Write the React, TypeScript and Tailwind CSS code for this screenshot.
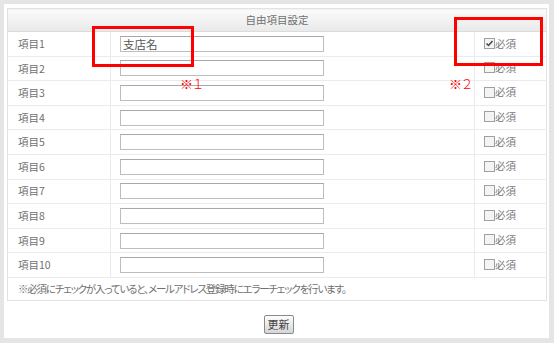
import React from 'react';

const font = { fontFamily: '"Noto Sans CJK JP", "Liberation Sans", sans-serif' };

function CheckBox({ checked }: { checked?: boolean }) {
  return (
    <span className="inline-flex w-[11px] h-[11px] border border-[#a0a0a0] bg-[#f4f4f4] items-center justify-center">
      {checked && (
        <svg width="9" height="9" viewBox="0 0 9 9">
          <path d="M1.5 4.5 L3.5 6.5 L7.5 2" stroke="#444" strokeWidth="1.5" fill="none" />
        </svg>
      )}
    </span>
  );
}

const rows = Array.from({ length: 10 }, (_, i) => i + 1);

export default function App() {
  return (
    <div className="w-[554px] h-[343px] bg-[#e5e5e5] p-[4px] pb-[5px]" style={font}>
      <div className="relative h-full w-[545px] bg-white px-[3px] pt-[4px] text-[10.5px] text-[#707070] [font-feature-settings:'palt']">
        <table className="w-[539px] border-collapse border border-[#e2e2e2] table-fixed">
          <colgroup>
            <col className="w-[103px]" />
            <col className="w-[364px]" />
            <col className="w-[72px]" />
          </colgroup>
          <thead>
            <tr className="h-[23px]">
              <th colSpan={3} className="p-0 font-normal text-center bg-gradient-to-b from-[#fbfbfb] to-[#e9e9e9] border-b border-[#dcdcdc]">
                自由項目設定
              </th>
            </tr>
          </thead>
          <tbody>
            {rows.map((n) => (
              <tr key={n} className="h-[24.6px] border-b border-[#ebebeb]">
                <td className="p-0 pl-[10px] border-r border-[#ebebeb]">項目{n}</td>
                <td className="p-0 pl-[9px]">
                  <div className="w-[204px] h-[16px] border border-[#bdbdbd] border-t-[#a8a8a8] bg-white text-[11.5px] leading-[14px] pl-[2px] text-[#555]">
                    {n === 1 ? '支店名' : ''}
                  </div>
                </td>
                <td className="p-0 pl-[9px] border-l border-[#ebebeb]">
                  <span className="inline-flex items-center text-[#7a7a7a]">
                    <CheckBox checked={n === 1} />
                    <span>必須</span>
                  </span>
                </td>
              </tr>
            ))}
            <tr className="h-[23px]">
              <td colSpan={3} className="p-0 pl-[10px] tracking-[-1.2px]">
                ※必須にチェックが入っていると、メールアドレス登録時にエラーチェックを行います。
              </td>
            </tr>
          </tbody>
        </table>
        <div className="flex justify-center pt-[14px] pl-[4px]">
          <button className="h-[19px] px-[3px] border border-[#8a8a8a] bg-gradient-to-b from-[#fdfdfd] to-[#d6d6d6] text-[11px] leading-[16px] text-[#444] rounded-[2px]">
            更新
          </button>
        </div>

        <div className="absolute left-[88px] top-[22px] w-[102px] h-[41px] border-[3px] border-[#ff0000]" />
        <div className="absolute left-[450px] top-[13px] w-[89px] h-[49px] border-[3px] border-[#ff0000]" />
        <span className="absolute left-[176px] top-[70px] text-[13px] font-light text-[#ff0000]">※１</span>
        <span className="absolute left-[445px] top-[70px] text-[13px] font-light text-[#ff0000]">※２</span>
      </div>
    </div>
  );
}
